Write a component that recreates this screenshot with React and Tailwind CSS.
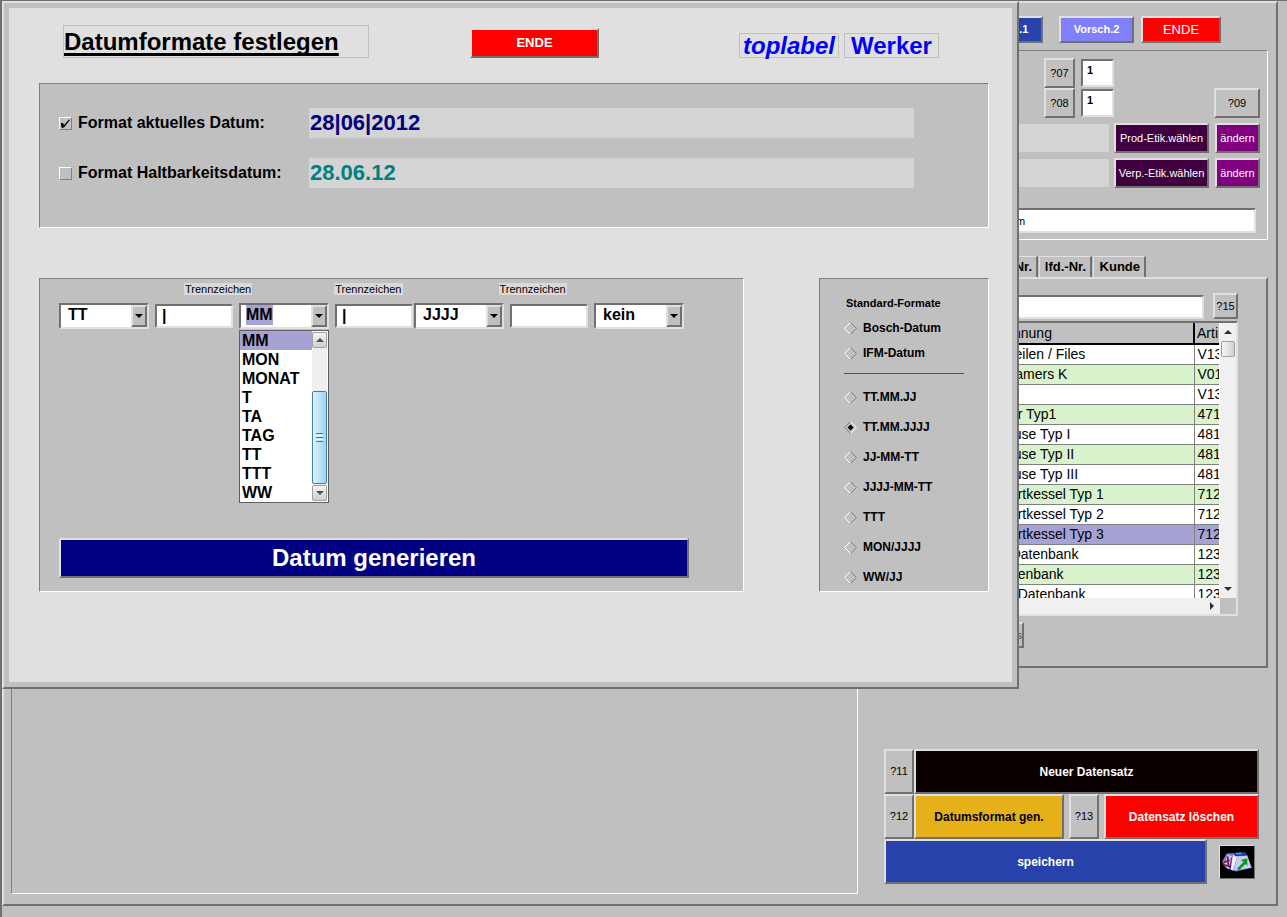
import clsx from 'clsx';

const raised = 'border-2 border-t-[#e0e0e0] border-l-[#e0e0e0] border-r-[#707070] border-b-[#707070]';
const sunken = 'border-2 border-t-[#707070] border-l-[#707070] border-r-[#e0e0e0] border-b-[#e0e0e0]';
const groove = 'border border-t-[#808080] border-l-[#808080] border-r-white border-b-white';

const artikel = [
  { name: 'Zeilen / Files', nr: 'V13' },
  { name: 'Kamers K', nr: 'V01' },
  { name: '', nr: 'V13' },
  { name: 'ter Typ1', nr: '471' },
  { name: 'äuse Typ I', nr: '481' },
  { name: 'äuse Typ II', nr: '481' },
  { name: 'äuse Typ III', nr: '481' },
  { name: 'tortkessel Typ 1', nr: '712' },
  { name: 'tortkessel Typ 2', nr: '712' },
  { name: 'tortkessel Typ 3', nr: '712', active: true },
  { name: '-Datenbank', nr: '123' },
  { name: 'atenbank', nr: '123' },
  { name: 'e Datenbank', nr: '123' }
];

const kurzFormate = ['Bosch-Datum', 'IFM-Datum'];
const formate = ['TT.MM.JJ', 'TT.MM.JJJJ', 'JJ-MM-TT', 'JJJJ-MM-TT', 'TTT', 'MON/JJJJ', 'WW/JJ'];
const kuerzel = ['MM', 'MON', 'MONAT', 'T', 'TA', 'TAG', 'TT', 'TTT', 'WW'];

function Button({ className, children, ...rest }) {
  return (
    <button type="button" className={clsx('flex items-center whitespace-nowrap', raised, className)} {...rest}>
      <span className="flex-1 text-center">{children}</span>
    </button>
  );
}

function HelpButton({ nr, className }) {
  return <Button className={clsx('shrink-0 text-[11px]', className)}>?{nr}</Button>;
}

function Arrow({ dir = 'down', className }) {
  const points = { down: '0,0 8,0 4,4', up: '0,4 8,4 4,0', right: '2,0 6,4 2,8' };
  return (
    <svg viewBox={dir === 'right' ? '0 0 8 8' : '0 0 8 4'} className={clsx('w-2', dir === 'right' ? 'h-2' : 'h-1', className)}>
      <polygon points={points[dir]} fill="currentColor" />
    </svg>
  );
}

function Combo({ label, value, open }) {
  return (
    <div className={clsx('relative h-[26px] w-[90px] shrink-0 bg-white', sunken)}>
      <select
        aria-label={label}
        defaultValue={value}
        className={clsx(
          'block appearance-none text-[16px] leading-5 font-bold',
          open ? 'ml-[5px] w-[27px] bg-[#a5a3d3]' : 'w-full pl-[7px]'
        )}
      >
        <option>{value}</option>
      </select>
      <span className={clsx('pointer-events-none absolute inset-y-0 right-0 flex w-4 items-center justify-center bg-[#c0c0c0]', raised)}>
        <Arrow className="shrink-0" />
      </span>
      {open && <Dropdown />}
    </div>
  );
}

function Dropdown() {
  const scrollButton = 'flex h-4 items-center justify-center rounded-xs border border-[#a0a0a0] bg-linear-to-b from-[#f4f4f4] to-[#cfcfcf]';
  return (
    <div className="absolute top-full -left-0.5 z-10 mt-[3px] flex w-[90px] border border-[#606060] bg-white">
      <ul role="listbox" aria-label="Kürzel" className="flex-1 text-[16px] leading-[19px] font-bold">
        {kuerzel.map((k) => (
          <li key={k} role="option" aria-selected={k === 'MM'} className={clsx('pl-0.5', k === 'MM' && 'bg-[#a5a3d3]')}>
            {k}
          </li>
        ))}
      </ul>
      <div className="my-px mr-px flex w-[15px] flex-col bg-[#efefef]">
        <div className={scrollButton}>
          <Arrow dir="up" className="text-[#505050]" />
        </div>
        <div className="mt-[43px] mb-px flex flex-1 flex-col items-center justify-center gap-px rounded-xs border border-[#3c7fb1] bg-linear-to-r from-[#dff2fc] to-[#9cd3f2]">
          <span className="h-px w-[7px] bg-[#3c7fb1]" />
          <span className="h-px w-[7px] bg-white" />
          <span className="h-px w-[7px] bg-[#3c7fb1]" />
          <span className="h-px w-[7px] bg-white" />
          <span className="h-px w-[7px] bg-[#3c7fb1]" />
        </div>
        <div className={scrollButton}>
          <Arrow className="text-[#505050]" />
        </div>
      </div>
    </div>
  );
}

function Separator({ id, value, className }) {
  return (
    <input
      id={id}
      type="text"
      defaultValue={value}
      className={clsx('h-6 w-[78px] shrink-0 bg-white pl-[5px] text-[16px] font-bold', sunken, className)}
    />
  );
}

function FormatRow({ label, value, checked, color }) {
  return (
    <div className="flex h-[30px] items-center">
      <label className="flex w-[250px] shrink-0 items-center gap-1.5 text-[16px] leading-5 font-bold">
        <span className="grid">
          <input
            type="checkbox"
            defaultChecked={checked}
            className="size-[13px] appearance-none border border-t-white border-r-[#808080] border-b-[#808080] border-l-white [grid-area:1/1]"
          />
          {checked && (
            <svg viewBox="0 0 13 13" className="pointer-events-none size-[13px] [grid-area:1/1]">
              <path d="M2 6 L4 6 L5 8 L10 2.500 L11 3 L5 10.500 L3 11 L2 9 Z" fill="#000" />
            </svg>
          )}
        </span>
        {label}
      </label>
      <output className={clsx('h-full flex-1 bg-[#d4d4d4] pl-px text-[22px] leading-[30px] font-bold', color)}>{value}</output>
    </div>
  );
}

function Radio({ label, checked }) {
  return (
    <label className="flex items-center gap-1.5 text-[12px] leading-[14px] font-bold">
      <span className="grid">
        <svg viewBox="0 0 13 13" className="size-[13px] [grid-area:1/1]" fill="none">
          <path d="M6.500 0.500 L0.500 6.500 L6.500 12.500" stroke={checked ? '#808080' : '#fff'} />
          <path d="M6.500 0.500 L12.500 6.500 L6.500 12.500" stroke={checked ? '#fff' : '#808080'} />
          {checked && <path d="M6.500 3.500 L9.500 6.500 L6.500 9.500 L3.500 6.500 Z" fill="#000" />}
        </svg>
        <input type="radio" name="format" defaultChecked={checked} className="size-[13px] appearance-none [grid-area:1/1]" />
      </span>
      {label}
    </label>
  );
}

function FormatDialog() {
  const caption = 'bg-[#d9d9d9] px-px text-[11px] leading-3';
  return (
    <div role="dialog" aria-label="Datumformate festlegen" className={clsx('absolute top-0 right-[268px] left-0 bg-[#c0c0c0] p-[5px]', raised)}>
      <div className="bg-[#e0e0e0] pr-[23px] pb-[90px] pl-[30px]">
        <header className="flex h-[50px] items-end pl-6">
          <h1 className="h-[33px] w-[306px] border border-[#c0c0c0] text-[24px] leading-8 font-bold underline decoration-3 underline-offset-3 [text-decoration-skip-ink:none]">
            Datumformate festlegen
          </h1>
          <Button className="ml-[101px] h-[30px] w-[129px] bg-[#ff0000] text-[13px] font-bold text-white">ENDE</Button>
          <div className="ml-[140px] h-[25px] w-[100px] border border-[#c0c0c0] text-center text-[24px] leading-6 font-bold text-[#0000ff] italic">
            toplabel
          </div>
          <div className="ml-[5px] h-[25px] w-[95px] border border-[#c0c0c0] text-center text-[24px] leading-6 font-bold text-[#0000ff]">
            Werker
          </div>
        </header>

        <section className={clsx('mt-[25px] flex flex-col gap-5 bg-[#c0c0c0] pt-6 pr-[74px] pb-[39px] pl-[19px]', groove)}>
          <FormatRow label="Format aktuelles Datum:" value="28|06|2012" checked color="text-[#000080]" />
          <FormatRow label="Format Haltbarkeitsdatum:" value="28.06.12" color="text-[#008080]" />
        </section>

        <div className="mt-[50px] flex gap-[75px]">
          <section className={clsx('flex flex-1 flex-col bg-[#c0c0c0] pt-1 pr-[54px] pb-[13px] pl-[19px]', groove)}>
            <div className="flex pl-[125px]">
              <label htmlFor="trenn1" className={caption}>Trennzeichen</label>
              <label htmlFor="trenn2" className={clsx('ml-[82px]', caption)}>Trennzeichen</label>
              <label htmlFor="trenn3" className={clsx('ml-24', caption)}>Trennzeichen</label>
            </div>
            <div className="mt-2 flex items-center gap-1.5">
              <Combo label="Teil 1" value="TT" />
              <Separator id="trenn1" value="|" />
              <Combo label="Teil 2" value="MM" open />
              <div className="flex items-center gap-px">
                <Separator id="trenn2" value="|" />
                <Combo label="Teil 3" value="JJJJ" />
              </div>
              <Separator id="trenn3" value="" />
              <Combo label="Teil 4" value="kein" />
            </div>
            <Button className="mt-[209px] h-10 bg-[#000080] text-[24px] font-bold text-white">Datum generieren</Button>
          </section>

          <section className={clsx('w-[170px] shrink-0 bg-[#c0c0c0] px-6 pt-[17px]', groove)}>
            <h2 className="pl-0.5 text-[11px] leading-[14px] font-bold">Standard-Formate</h2>
            <div className="mt-[11px] flex flex-col gap-[11px]">
              {kurzFormate.map((f) => (
                <Radio key={f} label={f} />
              ))}
            </div>
            <hr className="mt-[13px] border-[#e01020]" />
            <div className="mt-4 flex flex-col gap-4">
              {formate.map((f) => (
                <Radio key={f} label={f} checked={f === 'TT.MM.JJJJ'} />
              ))}
            </div>
          </section>
        </div>
      </div>
    </div>
  );
}

function ArtikelTable() {
  return (
    <div className={clsx('mt-0.5 ml-auto flex h-[295px] w-[236px] flex-col', sunken)}>
      <div className="flex h-[275px]">
        <div className="flex-1 overflow-hidden border-r border-white bg-white">
          <table className="w-full table-fixed border-collapse text-[14px] leading-[19px] whitespace-nowrap">
            <thead>
              <tr className="h-[21px] bg-[#c0c0c0] text-left">
                <th className="w-[190px] overflow-hidden border-r-2 border-b-2 border-black pl-0.5 font-normal">chnung</th>
                <th className="overflow-hidden border-b-2 border-black pl-0.5 font-normal">Arti</th>
              </tr>
            </thead>
            <tbody>
              {artikel.map((a, i) => (
                <tr key={i} className={clsx('h-5', a.active ? 'bg-[#a5a3d3]' : i % 2 ? 'bg-[#d9f3cc]' : 'bg-white')}>
                  <td className="border-r border-b border-[#808080] pl-0.5">{a.name}</td>
                  <td className="overflow-hidden border-b border-[#808080] pl-[3px]">{a.nr}</td>
                </tr>
              ))}
            </tbody>
          </table>
        </div>
        <div className="flex w-4 flex-col items-center bg-[#f0f0f0] py-[7px]">
          <Arrow dir="up" className="text-[#303030]" />
          <span className="mt-[7px] h-4 w-[14px] rounded-xs border border-[#a0a0a0] bg-linear-to-r from-[#f8f8f8] to-[#d0d0d0]" />
          <Arrow className="mt-auto text-[#303030]" />
        </div>
      </div>
      <div className="mr-4 flex flex-1 items-center justify-end bg-[#f0f0f0] pr-1">
        <Arrow dir="right" className="text-[#303030]" />
      </div>
    </div>
  );
}

function ToolboxIcon() {
  return (
    <svg viewBox="0 0 36 34" className="size-full">
      <path d="M7 8 L27 7 L34 23 L17 27 L6 23 L2 17 Z" fill="#7a7ad8" />
      <path d="M8 9 L13 11 L9 25 L4 20 Z" fill="#c8c8f4" />
      <path d="M18 11 L29 10 L33 23 L15 26 Z" fill="#c9cdf5" />
      <path d="M14 9 L18 11 L14 26 L11 25 Z" fill="#f0f0ff" />
      <path d="M14 8 L27 7 L28 10 L16 11 Z" fill="#2030b8" />
      <path d="M17 8 L23 8" stroke="#28a0e8" strokeWidth="2" />
      <path d="M8 11 L9 22 M3 18 L10 15 M4 20 L11 22" stroke="#901830" strokeWidth="2" fill="none" />
      <path d="M12 12 L11 24" stroke="#2020a0" strokeWidth="1" />
      <path d="M29 13 L29 21 L27 19 L20 26 L18 24 L25 17 L22 15 Z" fill="#0a9a20" />
    </svg>
  );
}

function MainWindow() {
  const tab = 'flex h-[21px] items-center justify-end border-t border-r-2 border-l border-t-[#e0e0e0] border-r-[#707070] border-l-[#e0e0e0] pr-1 text-[13px] font-bold whitespace-nowrap';
  const etikett = 'h-[30px] w-[95px] shrink-0 bg-[#400040] text-[11px] text-white';
  const aendern = 'h-[30px] w-[45px] shrink-0 bg-[#800080] text-[11px] text-white';
  const zahl = 'h-7 w-[33px] bg-white pb-1.5 pl-1 text-[11px] font-bold';
  return (
    <main className={clsx('flex flex-1 gap-3 pt-[7px] pr-2 pb-2.5 pl-[7px]', raised)}>
      <div className={clsx('flex-1', groove)} />

      <div className="flex w-[398px] shrink-0 flex-col pt-1.5">
        <div className="flex justify-end pr-[47px]">
          <Button className="h-[27px] w-[75px] bg-[#2743ab] text-[11px] font-bold text-white">Vorsch.1</Button>
          <Button className="ml-4 h-[27px] w-[75px] bg-[#8080ff] text-[11px] font-bold text-white">Vorsch.2</Button>
          <Button className="ml-[7px] h-[27px] w-20 bg-[#ff0000] text-[13px] text-white">ENDE</Button>
        </div>

        <section className={clsx('mt-[7px] flex flex-col pt-[7px] pr-[7px] pb-1.5', groove)}>
          <div className="flex items-end justify-end">
            <div>
              <HelpButton nr="07" className="h-[30px] w-[31px]" />
              <HelpButton nr="08" className="h-[30px] w-[31px]" />
            </div>
            <div className="mr-[100px] mb-px ml-1.5 flex flex-col gap-0.5">
              <input type="text" aria-label="?07" defaultValue="1" className={clsx(zahl, sunken)} />
              <input type="text" aria-label="?08" defaultValue="1" className={clsx(zahl, sunken)} />
            </div>
            <HelpButton nr="09" className="h-[30px] w-[46px]" />
          </div>
          <div className="mt-[5px] flex items-center">
            <output className="h-7 flex-1 bg-[#d4d4d4]" />
            <Button className={clsx('ml-[5px]', etikett)}>Prod-Etik.wählen</Button>
            <Button className={clsx('ml-1.5', aendern)}>ändern</Button>
          </div>
          <div className="mt-[5px] flex items-center">
            <output className="h-7 flex-1 bg-[#d4d4d4]" />
            <Button className={clsx('ml-[5px]', etikett)}>Verp.-Etik.wählen</Button>
            <Button className={clsx('ml-1.5', aendern)}>ändern</Button>
          </div>
          <input
            type="text"
            aria-label="Bemerkung"
            defaultValue="m"
            className={clsx('mt-5 mr-1 ml-auto h-[25px] w-[243px] bg-white pl-px text-[11px]', sunken)}
          />
        </section>

        <div role="tablist" className="mt-4 flex gap-px pl-[108px]">
          <button type="button" role="tab" className={clsx('w-[60px]', tab)}>Art.-Nr.</button>
          <button type="button" role="tab" className={clsx('w-[53px]', tab)}>lfd.-Nr.</button>
          <button type="button" role="tab" className={clsx('w-[53px]', tab)}>Kunde</button>
        </div>
        <section className={clsx('flex flex-col pt-[14px] pr-7 pb-[18px]', raised)}>
          <div className="flex items-end gap-[9px]">
            <input type="text" aria-label="Suche" className={clsx('h-6 flex-1 bg-white', sunken)} />
            <HelpButton nr="15" className="h-[26px] w-[25px]" />
          </div>
          <ArtikelTable />
          <Button className="mt-1.5 mr-[214px] ml-auto h-[26px] pl-2 text-[11px] text-[#205080]">Infos</Button>
        </section>

        <div className="mt-auto mb-2.5 pr-[9px] pl-[14px] text-[12px] font-bold">
          <div className="flex h-[45px]">
            <HelpButton nr="11" className="w-[30px] font-normal" />
            <Button className="flex-1 bg-[#0a0000] text-white">Neuer Datensatz</Button>
          </div>
          <div className="flex h-[45px]">
            <HelpButton nr="12" className="w-[30px] font-normal" />
            <Button className="w-[150px] bg-[#e6b018]">Datumsformat gen.</Button>
            <HelpButton nr="13" className="mx-[5px] w-[30px] font-normal" />
            <Button className="flex-1 bg-[#ff0000] text-white">Datensatz löschen</Button>
          </div>
          <div className="flex h-[45px] items-center">
            <Button className="h-full flex-1 bg-[#2743ab] text-white">speichern</Button>
            <button
              type="button"
              aria-label="Werkzeug"
              className="mr-1 ml-3 h-[34px] w-9 border border-t-[#e0e0e0] border-r-[#707070] border-b-[#707070] border-l-[#e0e0e0] bg-black"
            >
              <ToolboxIcon />
            </button>
          </div>
        </div>
      </div>
    </main>
  );
}

export default function App() {
  return (
    <div className="relative flex min-h-screen flex-col border-t border-l-2 border-[#707070] bg-[#c0c0c0] pr-[9px] pb-[11px] font-['Liberation_Sans',Arial,sans-serif] text-black">
      <MainWindow />
      <FormatDialog />
    </div>
  );
}
